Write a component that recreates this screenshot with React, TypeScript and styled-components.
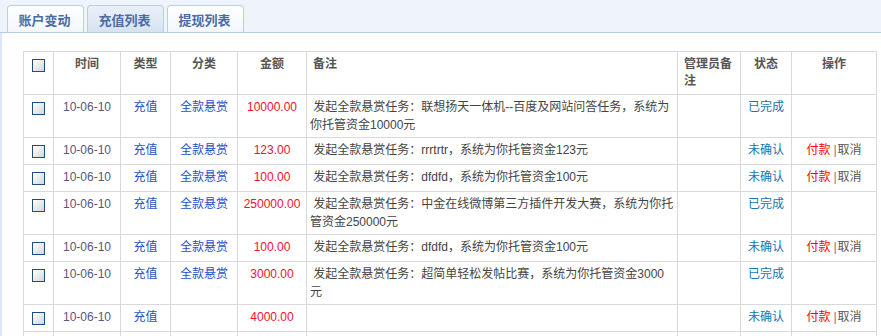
import styled, { createGlobalStyle } from "styled-components";

const GlobalStyle = createGlobalStyle`
  body {
    margin: 0;
    background: #fff;
    font-family: "Liberation Sans", "Noto Sans CJK SC", sans-serif;
    font-size: 12px;
  }
`;

const TabBar = styled.div`
  height: 27px;
  padding: 5px 0 0 7px;
  display: flex;
  align-items: flex-end;
  gap: 3px;
  background: #eff4fb;
  border-bottom: 1px solid #b6cce6;
`;

const Tab = styled.div<{ $active?: boolean }>`
  width: 73px;
  height: 26px;
  box-sizing: content-box;
  display: flex;
  align-items: center;
  justify-content: center;
  padding-right: 2px;
  border: 1px solid #b9cee8;
  border-bottom: none;
  border-radius: 4px 4px 0 0;
  background: ${p => p.$active ? 'linear-gradient(#e9f0f8, #d7e3f1)' : 'linear-gradient(#ffffff, #f3f7fc)'};
  color: #4d6ba4;
  font-size: 13px;
  font-weight: bold;
`;

const Content = styled.div`
  border-left: 2px solid #dce8f7;
  padding: 18px 0 0 21px;
  min-height: 400px;
`;

const Table = styled.table`
  width: 854px;
  table-layout: fixed;
  border-collapse: collapse;
`;

const Th = styled.th<{ $left?: boolean }>`
  border: 1px solid #d9d9d9;
  padding: 4px 6px;
  line-height: 17px;
  vertical-align: top;
  text-align: ${p => p.$left ? 'left' : 'center'};
  font-weight: bold;
  color: #555;
`;

const Td = styled.td<{ $left?: boolean }>`
  border: 1px solid #d9d9d9;
  padding: ${p => p.$left ? '3px 2px 3px 3px' : '3px 4px'};
  height: 20px;
  line-height: 18px;
  vertical-align: top;
  text-align: ${p => p.$left ? 'left' : 'center'};
  color: #444;
  word-break: break-all;
`;

const Check = styled.span<{ $body?: boolean }>`
  display: block;
  width: 11px;
  height: 11px;
  margin: ${p => p.$body ? '4px' : '3px'} auto 0;
  border: 1px solid #1e4d7e;
  background: linear-gradient(135deg, #ffffff, #d6d6d6);
`;

const DateText = styled.span`
  color: #5a5679;
`;

const Link = styled.span`
  color: #1d50c8;
`;

const Money = styled.span`
  color: #f2102e;
`;

const Status = styled.span`
  color: #1474b0;
`;

const Pay = styled.span`
  color: #f00;
`;

const Sep = styled.span`
  color: #6a7a9a;
  margin: 0 1px 0 3px;
`;

const Cancel = styled.span`
  color: #555;
`;

interface Row {
  date: string,
  type: string,
  cat: string,
  amount: string,
  note: string,
  done?: boolean,
}

const rows: Row[] = [
  { date: '10-06-10', type: '充值', cat: '全款悬赏', amount: '10000.00', note: '发起全款悬赏任务：联想扬天一体机--百度及网站问答任务，系统为你托管资金10000元', done: true },
  { date: '10-06-10', type: '充值', cat: '全款悬赏', amount: '123.00', note: '发起全款悬赏任务：rrrtrtr，系统为你托管资金123元', done: false },
  { date: '10-06-10', type: '充值', cat: '全款悬赏', amount: '100.00', note: '发起全款悬赏任务：dfdfd，系统为你托管资金100元', done: false },
  { date: '10-06-10', type: '充值', cat: '全款悬赏', amount: '250000.00', note: '发起全款悬赏任务：中金在线微博第三方插件开发大赛，系统为你托管资金250000元', done: true },
  { date: '10-06-10', type: '充值', cat: '全款悬赏', amount: '100.00', note: '发起全款悬赏任务：dfdfd，系统为你托管资金100元', done: false },
  { date: '10-06-10', type: '充值', cat: '全款悬赏', amount: '3000.00', note: '发起全款悬赏任务：超简单轻松发帖比赛，系统为你托管资金3000元', done: true },
  { date: '10-06-10', type: '充值', cat: '', amount: '4000.00', note: '', done: false },
];

const widths = [30, 67, 50, 67, 69, 371, 63, 51, 85];

const App = () => {
  return (
    <>
      <GlobalStyle />
      <TabBar>
        <Tab>账户变动</Tab>
        <Tab $active>充值列表</Tab>
        <Tab>提现列表</Tab>
      </TabBar>
      <Content>
        <Table>
          <colgroup>
            {widths.map((w, i) => <col key={i} style={{ width: w }} />)}
          </colgroup>
          <thead>
            <tr>
              <Th><Check /></Th>
              <Th>时间</Th>
              <Th>类型</Th>
              <Th>分类</Th>
              <Th>金额</Th>
              <Th $left>备注</Th>
              <Th $left>管理员备注</Th>
              <Th>状态</Th>
              <Th>操作</Th>
            </tr>
          </thead>
          <tbody>
            {rows.map((r, i) => (
              <tr key={i}>
                <Td><Check $body /></Td>
                <Td><DateText>{r.date}</DateText></Td>
                <Td><Link>{r.type}</Link></Td>
                <Td><Link>{r.cat}</Link></Td>
                <Td><Money>{r.amount}</Money></Td>
                <Td $left>{r.note ? '\u00a0' + r.note : ''}</Td>
                <Td></Td>
                <Td><Status>{r.done ? '已完成' : '未确认'}</Status></Td>
                <Td>
                  {!r.done && <><Pay>付款</Pay><Sep>|</Sep><Cancel>取消</Cancel></>}
                </Td>
              </tr>
            ))}
            <tr>
              {widths.map((_, i) => <Td key={i}></Td>)}
            </tr>
          </tbody>
        </Table>
      </Content>
    </>
  );
}

export default App;
